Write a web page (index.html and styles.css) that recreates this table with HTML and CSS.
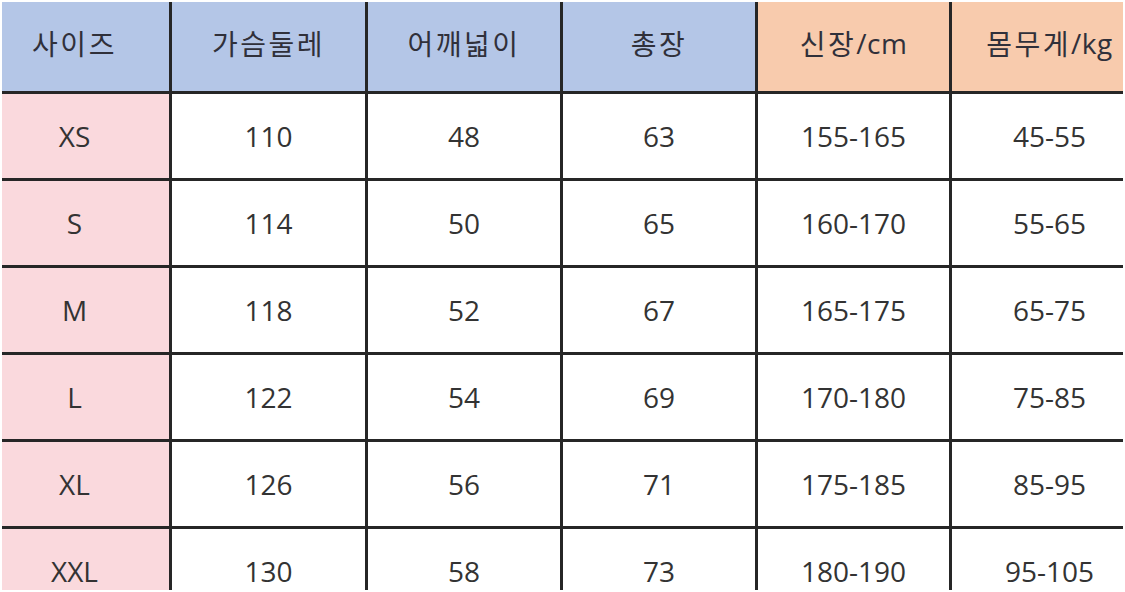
FILE: index.html
```html
<!DOCTYPE html>
<html lang="ko">
<head>
<meta charset="utf-8">
<title>사이즈표</title>
<link rel="stylesheet" href="styles.css">
</head>
<body>
<div class="sheet">
  <div class="grid">
    <div class="cell head blue first">사이즈</div>
    <div class="cell head blue">가슴둘레</div>
    <div class="cell head blue">어깨넓이</div>
    <div class="cell head blue">총장</div>
    <div class="cell head orange">신장<span class="unit">/cm</span></div>
    <div class="cell head orange last">몸무게<span class="unit">/kg</span></div>

    <div class="cell pink first">XS</div>
    <div class="cell">110</div>
    <div class="cell">48</div>
    <div class="cell">63</div>
    <div class="cell">155-165</div>
    <div class="cell last">45-55</div>

    <div class="cell pink first">S</div>
    <div class="cell">114</div>
    <div class="cell">50</div>
    <div class="cell">65</div>
    <div class="cell">160-170</div>
    <div class="cell last">55-65</div>

    <div class="cell pink first">M</div>
    <div class="cell">118</div>
    <div class="cell">52</div>
    <div class="cell">67</div>
    <div class="cell">165-175</div>
    <div class="cell last">65-75</div>

    <div class="cell pink first">L</div>
    <div class="cell">122</div>
    <div class="cell">54</div>
    <div class="cell">69</div>
    <div class="cell">170-180</div>
    <div class="cell last">75-85</div>

    <div class="cell pink first">XL</div>
    <div class="cell">126</div>
    <div class="cell">56</div>
    <div class="cell">71</div>
    <div class="cell">175-185</div>
    <div class="cell last">85-95</div>

    <div class="cell pink first">XXL</div>
    <div class="cell">130</div>
    <div class="cell">58</div>
    <div class="cell">73</div>
    <div class="cell">180-190</div>
    <div class="cell last">95-105</div>
  </div>
</div>
</body>
</html>
```

FILE: styles.css
```css
html, body {
  margin: 0;
  padding: 0;
  background: #ffffff;
}

.sheet {
  padding: 2px 0 0 2px;
  height: 588px;
  overflow: hidden;
}

.grid {
  display: grid;
  width: 1121px;
  grid-template-columns: 170px 196px 195px 195px 194px 171px;
  grid-template-rows: 92px repeat(6, 87px);
  font-family: "Open Sans", "Noto Sans CJK KR", sans-serif;
  color: #333333;
}

.cell {
  box-sizing: border-box;
  display: flex;
  align-items: center;
  justify-content: center;
  border-right: 3px solid #262626;
  border-bottom: 3px solid #262626;
  font-size: 28px;
  background: #ffffff;
}

.cell.last {
  border-right: none;
  padding-left: 24px;
}

.cell.first {
  padding-right: 22px;
}

.head {
  font-size: 28px;
  letter-spacing: 2.5px;
  padding-bottom: 8px;
  color: #30303a;
}

.unit {
  letter-spacing: 0.5px;
}

.blue {
  background: #b4c6e7;
}

.orange {
  background: #f8cbad;
}

.pink {
  background: #fad9dd;
}
```
